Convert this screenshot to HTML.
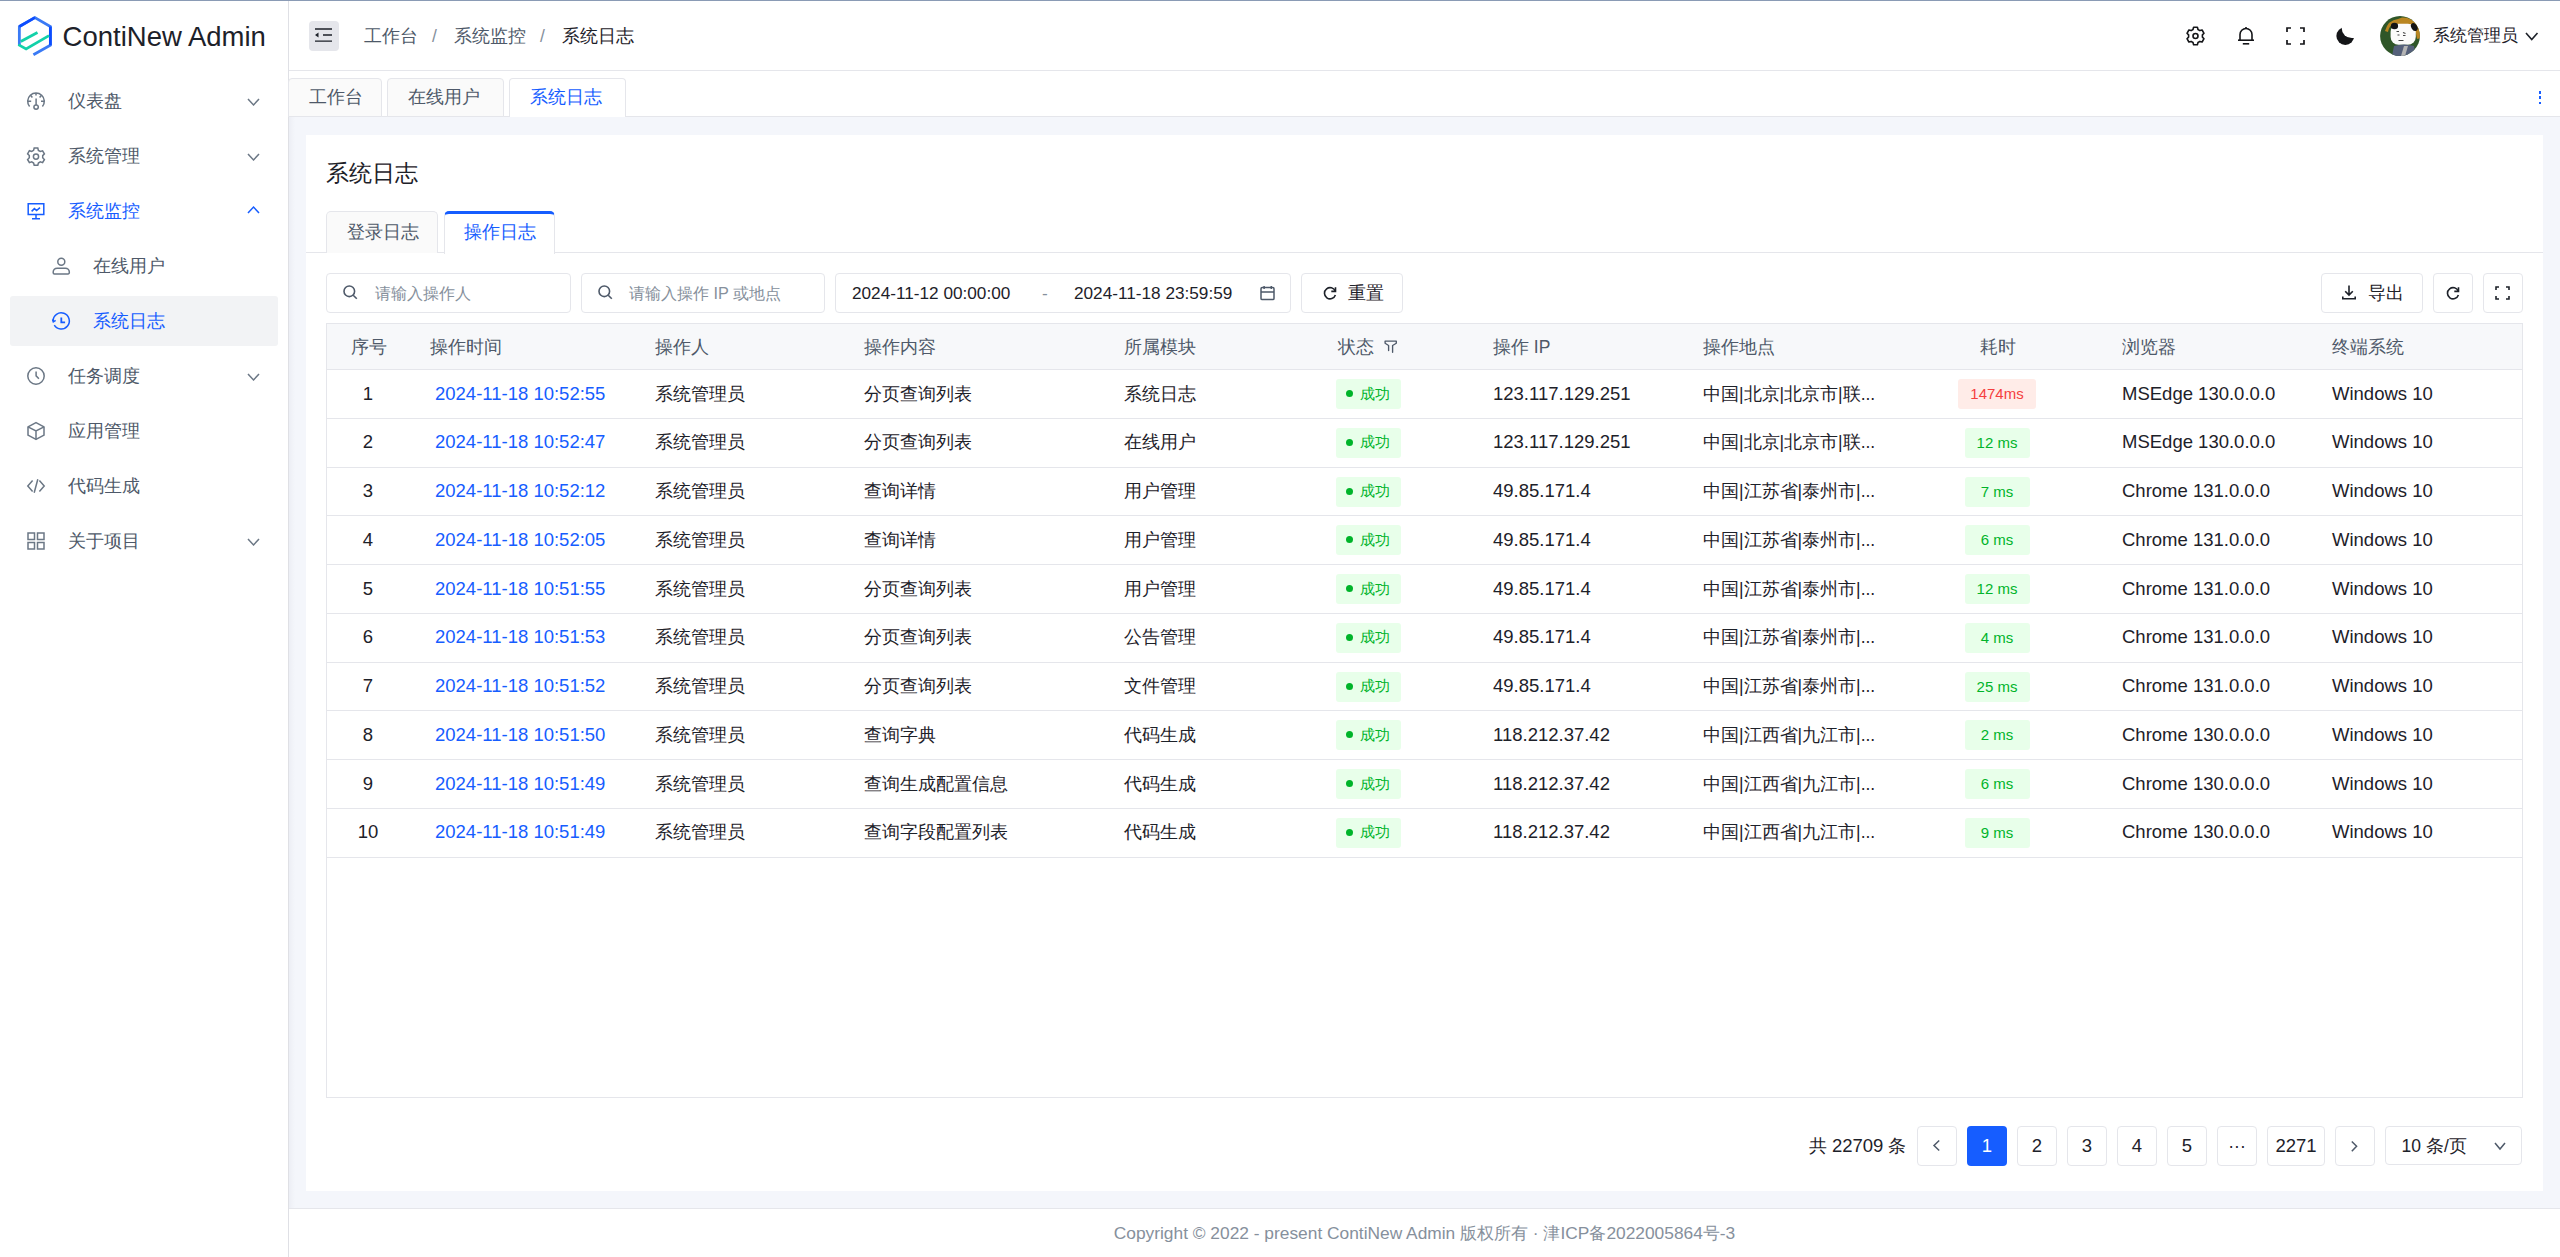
<!DOCTYPE html><html><head><meta charset="utf-8"><style>
*{box-sizing:border-box;margin:0;padding:0}
html,body{width:2560px;height:1257px;overflow:hidden;background:#fff}
body{font-family:"Liberation Sans",sans-serif;font-size:17.5px;color:#1d2129;position:relative}
.ab{position:absolute}
.t{position:absolute;white-space:nowrap;line-height:24px;height:24px}
.bd{border:1px solid #e5e6eb}
svg{position:absolute;overflow:visible}
</style></head><body>

<div class="ab" style="left:0px;top:0px;width:2560px;height:1px;background:#8a9bb5"></div>
<div class="ab" style="left:288px;top:1px;width:1px;height:1256px;background:#dfe0e5"></div>
<svg style="left:10px;top:10px" width="50" height="50" viewBox="0 0 50 50">
<g fill="none" stroke-width="2.8" stroke-linecap="butt" stroke-linejoin="miter" stroke-miterlimit="6">
<path d="M9.36 35.6V16.5L24.86 7.6 40.37 16.6V35.2L23.4 44.8" stroke="#3a7af5"/>
<path d="M9.36 16.5L24.86 7.6" stroke="#0c4cff"/>
<path d="M40.37 16.6V35.2" stroke="#0c4cff"/>
<path d="M8.35 34.6L16.1 38.9 39 25.65" stroke="#12d1a9"/>
<path d="M10.76 31.5L27.5 22.4" stroke="#12d1a9"/>
</g></svg>
<div class="t" style="left:62.6px;top:25px;font-size:27.5px;color:#1d2129;">ContiNew Admin</div>
<div class="ab" style="left:10px;top:296px;width:268px;height:50px;background:#f2f3f5;border-radius:3px"></div>
<svg style="left:27px;top:92px" width="18" height="18" viewBox="0 0 18 18"><g fill="none" stroke="#6b7785" stroke-width="1.5"><path d="M2.6 14.6 A8.3 8.3 0 1 1 15.4 14.6"/><path d="M9 1v2.6M3.5 3.2l1.9 2.3M14.5 3.2l-1.9 2.3M1 9.2h3.2M14 9.2h3.2"/><path d="M9.1 6.6v6.4"/><circle cx="9.1" cy="15.1" r="2.2"/></g></svg>
<div class="t" style="left:68px;top:89px;font-size:17.5px;color:#4e5969;">仪表盘</div>
<svg style="left:248px;top:99px" width="11" height="6" viewBox="0 0 11 6"><path d="M0 0 L5.5 6 L11 0" fill="none" stroke="#6b7785" stroke-width="1.5"/></svg>
<svg style="left:27px;top:147px" width="18" height="18" viewBox="0 0 18 18"><g fill="none" stroke="#6b7785" stroke-width="1.5"><path d="M7.2 1.1h3.6l.6 2.3 1.9 1.1 2.3-.7 1.8 3.1-1.7 1.7v2.2l1.7 1.7-1.8 3.1-2.3-.7-1.9 1.1-.6 2.3H7.2l-.6-2.3-1.9-1.1-2.3.7-1.8-3.1 1.7-1.7V8.5L.6 6.8l1.8-3.1 2.3.7 1.9-1.1z"/><circle cx="9" cy="9.6" r="2.6"/></g></svg>
<div class="t" style="left:68px;top:144px;font-size:17.5px;color:#4e5969;">系统管理</div>
<svg style="left:248px;top:154px" width="11" height="6" viewBox="0 0 11 6"><path d="M0 0 L5.5 6 L11 0" fill="none" stroke="#6b7785" stroke-width="1.5"/></svg>
<svg style="left:27px;top:202px" width="18" height="18" viewBox="0 0 18 18"><g fill="none" stroke="#165dff" stroke-width="1.5"><path d="M1.2 1.8h15.6v10.6H1.2z"/><path d="M9 12.4v4.4M5 16.8h8"/><path d="M4.6 9.4l2.8-2.8 2.2 2 3.4-3"/></g></svg>
<div class="t" style="left:68px;top:199px;font-size:17.5px;color:#165dff;">系统监控</div>
<svg style="left:248px;top:206.8px" width="11" height="6" viewBox="0 0 11 6"><path d="M0 6 L5.5 0 L11 6" fill="none" stroke="#165dff" stroke-width="1.5"/></svg>
<svg style="left:27px;top:367px" width="18" height="18" viewBox="0 0 18 18"><g fill="none" stroke="#6b7785" stroke-width="1.5"><circle cx="9" cy="9" r="8.2"/><path d="M9.1 4.5v4.4l2.8 2.8"/></g></svg>
<div class="t" style="left:68px;top:364px;font-size:17.5px;color:#4e5969;">任务调度</div>
<svg style="left:248px;top:374px" width="11" height="6" viewBox="0 0 11 6"><path d="M0 0 L5.5 6 L11 0" fill="none" stroke="#6b7785" stroke-width="1.5"/></svg>
<svg style="left:27px;top:422px" width="18" height="18" viewBox="0 0 18 18"><g fill="none" stroke="#6b7785" stroke-width="1.5"><path d="M9 .6 17 4.8v8.4L9 17.4 1 13.2V4.8z" stroke-linejoin="round"/><path d="M1 4.8 9 9l8-4.2M9 9v8.4"/></g></svg>
<div class="t" style="left:68px;top:419px;font-size:17.5px;color:#4e5969;">应用管理</div>
<svg style="left:27px;top:477px" width="18" height="18" viewBox="0 0 18 18"><g fill="none" stroke="#6b7785" stroke-width="1.5"><path d="M5.6 3.6 .8 9l4.8 5.4M12.4 3.6 17.2 9l-4.8 5.4M10.8 2.2 7.2 15.8"/></g></svg>
<div class="t" style="left:68px;top:474px;font-size:17.5px;color:#4e5969;">代码生成</div>
<svg style="left:27px;top:532px" width="18" height="18" viewBox="0 0 18 18"><g fill="none" stroke="#6b7785" stroke-width="1.5"><path d="M1 1h6.5v6.5H1zM10.5 1H17v6.5h-6.5zM1 10.5h6.5V17H1zM10.5 10.5H17V17h-6.5z"/></g></svg>
<div class="t" style="left:68px;top:529px;font-size:17.5px;color:#4e5969;">关于项目</div>
<svg style="left:248px;top:539px" width="11" height="6" viewBox="0 0 11 6"><path d="M0 0 L5.5 6 L11 0" fill="none" stroke="#6b7785" stroke-width="1.5"/></svg>
<svg style="left:52px;top:257px" width="18" height="18" viewBox="0 0 18 18"><g fill="none" stroke="#6b7785" stroke-width="1.5"><circle cx="9.3" cy="4.8" r="3.5"/><path d="M5.2 11.2h8.2a3.9 3.9 0 0 1 3.9 3.9v.6a1.2 1.2 0 0 1-1.2 1.2H2.4a1.2 1.2 0 0 1-1.2-1.2v-.6a3.9 3.9 0 0 1 3.9-3.9z"/></g></svg>
<div class="t" style="left:93px;top:254px;font-size:17.5px;color:#4e5969;">在线用户</div>
<svg style="left:52px;top:312px" width="18" height="18" viewBox="0 0 18 18"><g fill="none" stroke="#165dff" stroke-width="1.5"><path d="M2.3 13.2A8.1 8.1 0 1 0 1.1 9"/><path d="M.6 7.4 1.3 10 3.6 8.3" stroke-linejoin="round"/><path d="M9.3 5.6v4.7h3.8" stroke-width="1.8"/></g></svg>
<div class="t" style="left:93px;top:309px;font-size:17.5px;color:#165dff;">系统日志</div>
<div class="ab" style="left:289px;top:70px;width:2271px;height:1px;background:#e5e6eb"></div>
<div class="ab" style="left:309px;top:21px;width:30px;height:30px;background:#e5e6eb;border-radius:4px"></div>
<svg style="left:309px;top:21px" width="30" height="30" viewBox="0 0 30 30"><g stroke="#1d2129" stroke-width="1.3" fill="none">
<path d="M6 8h17M14 14h9M6 20.2h17"/></g><path d="M6 14 9.5 11.5v5z" fill="#1d2129"/></svg>
<div class="t" style="left:364px;top:24px;font-size:17.5px;color:#4e5969;">工作台</div>
<div class="t" style="left:432px;top:24px;font-size:17.5px;color:#86909c;">/</div>
<div class="t" style="left:454px;top:24px;font-size:17.5px;color:#4e5969;">系统监控</div>
<div class="t" style="left:540px;top:24px;font-size:17.5px;color:#86909c;">/</div>
<div class="t" style="left:561.5px;top:24px;font-size:17.5px;color:#1d2129;">系统日志</div>
<svg style="left:2186px;top:26px" width="19" height="19" viewBox="0 0 19 19"><g fill="none" stroke="#141518" stroke-width="1.6">
<path d="M7.6 1.3h3.8l.6 2.2 1.9 1.1 2.2-.6 1.9 3.3-1.6 1.6v2.2l1.6 1.6-1.9 3.3-2.2-.6-1.9 1.1-.6 2.2H7.6L7 16.5l-1.9-1.1-2.2.6L1 12.7l1.6-1.6V8.9L1 7.3 2.9 4l2.2.6L7 3.5z" stroke-linejoin="round"/><circle cx="9.5" cy="10" r="2.5"/></g></svg>
<svg style="left:2237px;top:26px" width="18" height="19" viewBox="0 0 18 19"><g fill="none" stroke="#141518" stroke-width="1.6">
<path d="M3 14.2V8.5a6 6 0 0 1 12 0v5.7"/><path d="M1 14.2h16"/><path d="M5.8 17.8h6.4"/><path d="M9 1v1.5"/></g></svg>
<svg style="left:2285.5px;top:26.5px" width="19" height="18" viewBox="0 0 19 18"><g fill="none" stroke="#141518" stroke-width="1.7">
<path d="M5 1H1v4M14 1h4v4M1 13v4h4M18 13v4h-4"/></g></svg>
<svg style="left:2336px;top:26.5px" width="18" height="18" viewBox="0 0 18 18"><defs><mask id="mm"><rect x="-2" y="-2" width="24" height="24" fill="#fff"/><circle cx="15.8" cy="1.0" r="10.1" fill="#000"/></mask></defs><circle cx="9.3" cy="9.0" r="8.9" fill="#141518" mask="url(#mm)"/></svg>
<svg style="left:2380px;top:16px" width="40" height="40" viewBox="0 0 40 40"><defs><clipPath id="cp"><circle cx="20" cy="20" r="19.9"/></clipPath></defs>
<g clip-path="url(#cp)"><rect width="40" height="40" fill="#2f5628"/>
<path d="M5 15 Q8 4 18 3 L22 1.5 Q30 1 36 7 Q40 12 41 22 L37 23 Q36 12 28 8.5 L14 8 Q9 9.5 8 16z" fill="#b98520"/>
<rect x="10.6" y="7.8" width="25.2" height="21" rx="8" fill="#fbfbfa"/>
<ellipse cx="14.5" cy="10" rx="3.6" ry="3.2" fill="#141414"/><ellipse cx="34.3" cy="11" rx="3" ry="4.2" transform="rotate(-30 34.3 11)" fill="#141414"/>
<path d="M12 40 L14 30 Q24 27 34 30 L36 40z" fill="#55607a"/><path d="M21 40 L24 30 L28 30 L25 40z" fill="#b4b4b4"/>
<path d="M16.5 15.5h2.5M23 16.5l2.5 1M17.5 19h2M23 19.5h2.5M18.5 24.5h5" stroke="#444" stroke-width="1.1"/></g></svg>
<div class="t" style="left:2433px;top:24px;font-size:17.1px;color:#1d2129;">系统管理员</div>
<svg style="left:2526px;top:33px" width="11.5" height="6.5" viewBox="0 0 11.5 6.5"><path d="M0 0 L5.75 6.5 L11.5 0" fill="none" stroke="#1d2129" stroke-width="1.6"/></svg>
<div class="ab" style="left:289px;top:116px;width:2271px;height:1px;background:#e5e6eb"></div>
<div class="ab" style="left:288px;top:78px;width:94px;height:39px;background:#fafafa;border:1px solid #e5e6eb;border-radius:4px 4px 0 0"></div>
<div class="ab" style="left:387px;top:78px;width:117px;height:39px;background:#fafafa;border:1px solid #e5e6eb;border-radius:4px 4px 0 0"></div>
<div class="ab" style="left:509px;top:78px;width:117px;height:39px;background:#fff;border:1px solid #e5e6eb;border-bottom:none;border-radius:4px 4px 0 0"></div>
<div class="t" style="left:309px;top:85px;font-size:17.5px;color:#4e5969;">工作台</div>
<div class="t" style="left:408px;top:85px;font-size:17.5px;color:#4e5969;">在线用户</div>
<div class="t" style="left:530px;top:85px;font-size:17.5px;color:#165dff;">系统日志</div>
<div class="ab" style="left:2538.6px;top:91.0px;width:2.599999999999909px;height:2.5999999999999943px;background:#165dff"></div>
<div class="ab" style="left:2538.6px;top:96.4px;width:2.599999999999909px;height:2.5999999999999943px;background:#165dff"></div>
<div class="ab" style="left:2538.6px;top:101.8px;width:2.599999999999909px;height:2.5999999999999943px;background:#165dff"></div>
<div class="ab" style="left:289px;top:117px;width:2271px;height:1091px;background:#f4f6fb"></div>
<div class="ab" style="left:289px;top:117px;width:6px;height:1091px;background:linear-gradient(to right,rgba(0,0,40,0.03),rgba(0,0,40,0))"></div>
<div class="ab" style="left:306px;top:135px;width:2237px;height:1056px;background:#fff"></div>
<div class="t" style="left:326px;top:161.5px;font-size:22.5px;color:#1d2129;">系统日志</div>
<div class="ab" style="left:306px;top:252px;width:2237px;height:1px;background:#e5e6eb"></div>
<div class="ab" style="left:326px;top:211px;width:112px;height:42px;background:#fafafa;border:1px solid #e5e6eb;border-bottom:none;border-radius:5px 5px 0 0"></div>
<div class="ab" style="left:444px;top:211px;width:111px;height:43px;background:#fff;border:1px solid #e5e6eb;border-top:3px solid #165dff;border-bottom:none;border-radius:5px 5px 0 0"></div>
<div class="t" style="left:347px;top:220px;font-size:17.5px;color:#4e5969;">登录日志</div>
<div class="t" style="left:464px;top:220px;font-size:17.5px;color:#165dff;">操作日志</div>
<div class="ab" style="left:326px;top:273px;width:245px;height:40px;border:1px solid #e5e6eb;border-radius:4px;background:#fff"></div>
<svg style="left:343px;top:285px" width="15" height="15" viewBox="0 0 15 15"><g fill="none" stroke="#4e5969" stroke-width="1.6"><circle cx="6.3" cy="6.3" r="5.3"/><path d="M10.2 10.2 13.8 13.8"/></g></svg>
<div class="t" style="left:375px;top:281px;font-size:16.25px;color:#86909c;">请输入操作人</div>
<div class="ab" style="left:581px;top:273px;width:244px;height:40px;border:1px solid #e5e6eb;border-radius:4px;background:#fff"></div>
<svg style="left:598px;top:285px" width="15" height="15" viewBox="0 0 15 15"><g fill="none" stroke="#4e5969" stroke-width="1.6"><circle cx="6.3" cy="6.3" r="5.3"/><path d="M10.2 10.2 13.8 13.8"/></g></svg>
<div class="t" style="left:629px;top:281px;font-size:16.25px;color:#86909c;">请输入操作 IP 或地点</div>
<div class="ab" style="left:835px;top:273px;width:456px;height:40px;border:1px solid #e5e6eb;border-radius:4px;background:#fff"></div>
<div class="t" style="left:852px;top:281px;font-size:17.2px;color:#1d2129;">2024-11-12 00:00:00</div>
<div class="t" style="left:1042px;top:281px;font-size:17.2px;color:#86909c;">-</div>
<div class="t" style="left:1074px;top:281px;font-size:17.2px;color:#1d2129;">2024-11-18 23:59:59</div>
<svg style="left:1260px;top:286px" width="15" height="14" viewBox="0 0 15 14"><g fill="none" stroke="#4e5969" stroke-width="1.5"><rect x="1" y="1.6" width="13" height="12" rx="1.2"/><path d="M1 6h13M4.1 0v3M11.3 0v3"/></g></svg>
<div class="ab" style="left:1301px;top:273px;width:102px;height:40px;border:1px solid #e5e6eb;border-radius:4px;background:#fff"></div>
<svg style="left:1323px;top:286px" width="14" height="14" viewBox="0 0 14 14"><g fill="none" stroke="#1d2129" stroke-width="1.6"><path d="M12.3 5.2A5.6 5.6 0 1 0 12.4 9"/><path d="M12.5 1.2v4.2H8.3"/></g></svg>
<div class="t" style="left:1348px;top:281px;font-size:17.5px;color:#1d2129;">重置</div>
<div class="ab" style="left:2321px;top:273px;width:102px;height:40px;border:1px solid #e5e6eb;border-radius:4px;background:#fff"></div>
<svg style="left:2342px;top:285px" width="14" height="15" viewBox="0 0 14 15"><g fill="none" stroke="#1d2129" stroke-width="1.6"><path d="M7 0.6v9.6M3.2 6.2 7 10l3.8-3.8"/><path d="M.8 11.5v2.3h12.4v-2.3"/></g></svg>
<div class="t" style="left:2368px;top:281px;font-size:17.5px;color:#1d2129;">导出</div>
<div class="ab" style="left:2433px;top:273px;width:40px;height:40px;border:1px solid #e5e6eb;border-radius:4px;background:#fff"></div>
<svg style="left:2446px;top:286px" width="14" height="14" viewBox="0 0 14 14"><g fill="none" stroke="#1d2129" stroke-width="1.6"><path d="M12.3 5.2A5.6 5.6 0 1 0 12.4 9"/><path d="M12.5 1.2v4.2H8.3"/></g></svg>
<div class="ab" style="left:2483px;top:273px;width:40px;height:40px;border:1px solid #e5e6eb;border-radius:4px;background:#fff"></div>
<svg style="left:2495px;top:285.5px" width="15" height="14" viewBox="0 0 15 14"><g fill="none" stroke="#1d2129" stroke-width="1.6"><path d="M4 1H1v3M11 1h3v3M1 10v3h3M14 10v3h-3"/></g></svg>
<div class="ab" style="left:326px;top:323px;width:2197px;height:775px;border:1px solid #e5e6eb;background:#fff"></div>
<div class="ab" style="left:327px;top:324px;width:2195px;height:45px;background:#f7f8fa"></div>
<div class="ab" style="left:327px;top:369px;width:2195px;height:1px;background:#e5e6eb"></div>
<div class="t" style="left:351px;top:334.5px;font-size:17.5px;color:#4e5969;">序号</div>
<div class="t" style="left:430px;top:334.5px;font-size:17.5px;color:#4e5969;">操作时间</div>
<div class="t" style="left:655px;top:334.5px;font-size:17.5px;color:#4e5969;">操作人</div>
<div class="t" style="left:864px;top:334.5px;font-size:17.5px;color:#4e5969;">操作内容</div>
<div class="t" style="left:1124px;top:334.5px;font-size:17.5px;color:#4e5969;">所属模块</div>
<div class="t" style="left:1338px;top:334.5px;font-size:17.5px;color:#4e5969;">状态</div>
<div class="t" style="left:1493px;top:334.5px;font-size:17.5px;color:#4e5969;">操作 IP</div>
<div class="t" style="left:1703px;top:334.5px;font-size:17.5px;color:#4e5969;">操作地点</div>
<div class="t" style="left:1980px;top:334.5px;font-size:17.5px;color:#4e5969;">耗时</div>
<div class="t" style="left:2122px;top:334.5px;font-size:17.5px;color:#4e5969;">浏览器</div>
<div class="t" style="left:2332px;top:334.5px;font-size:17.5px;color:#4e5969;">终端系统</div>
<svg style="left:1384px;top:340px" width="14" height="14" viewBox="0 0 14 14"><path d="M1.1 1.1H12.3V3.2L8.6 5.5V12.2M1.1 1.1V3.2L4.6 5.5V10.5" fill="none" stroke="#4e5969" stroke-width="1.35" stroke-linejoin="round" stroke-linecap="round"/></svg>
<div class="ab" style="left:327px;top:418px;width:2195px;height:1px;background:#e5e6eb"></div>
<div class="t" style="left:326px;width:84px;text-align:center;top:381.5px;font-size:18.5px">1</div>
<div class="t" style="left:435px;top:381.5px;font-size:18.5px;color:#165dff;">2024-11-18 10:52:55</div>
<div class="t" style="left:655px;top:381.5px;font-size:17.5px;color:#1d2129;">系统管理员</div>
<div class="t" style="left:864px;top:381.5px;font-size:17.5px;color:#1d2129;">分页查询列表</div>
<div class="t" style="left:1124px;top:381.5px;font-size:17.5px;color:#1d2129;">系统日志</div>
<div class="ab" style="left:1336px;top:379.0px;width:65px;height:30px;background:#e8ffea;border-radius:3px"></div>
<div class="ab" style="left:1346.4px;top:390.0px;width:7px;height:7px;border-radius:50%;background:#00b42a"></div>
<div class="t" style="left:1359.5px;top:381.5px;font-size:15px;color:#00b42a;">成功</div>
<div class="t" style="left:1493px;top:381.5px;font-size:18.5px;color:#1d2129;">123.117.129.251</div>
<div class="t" style="left:1703px;top:381.5px;font-size:17.5px;color:#1d2129;">中国|北京|北京市|联...</div>
<div class="ab" style="left:1958.0px;top:379.0px;width:78px;height:30px;background:#ffece8;border-radius:3px;color:#f53f3f;font-size:15px;line-height:30px;text-align:center;white-space:nowrap">1474ms</div>
<div class="t" style="left:2122px;top:381.5px;font-size:18.5px;color:#1d2129;">MSEdge 130.0.0.0</div>
<div class="t" style="left:2332px;top:381.5px;font-size:18.5px;color:#1d2129;">Windows 10</div>
<div class="ab" style="left:327px;top:467px;width:2195px;height:1px;background:#e5e6eb"></div>
<div class="t" style="left:326px;width:84px;text-align:center;top:430.25px;font-size:18.5px">2</div>
<div class="t" style="left:435px;top:430.25px;font-size:18.5px;color:#165dff;">2024-11-18 10:52:47</div>
<div class="t" style="left:655px;top:430.25px;font-size:17.5px;color:#1d2129;">系统管理员</div>
<div class="t" style="left:864px;top:430.25px;font-size:17.5px;color:#1d2129;">分页查询列表</div>
<div class="t" style="left:1124px;top:430.25px;font-size:17.5px;color:#1d2129;">在线用户</div>
<div class="ab" style="left:1336px;top:427.75px;width:65px;height:30px;background:#e8ffea;border-radius:3px"></div>
<div class="ab" style="left:1346.4px;top:438.75px;width:7px;height:7px;border-radius:50%;background:#00b42a"></div>
<div class="t" style="left:1359.5px;top:430.25px;font-size:15px;color:#00b42a;">成功</div>
<div class="t" style="left:1493px;top:430.25px;font-size:18.5px;color:#1d2129;">123.117.129.251</div>
<div class="t" style="left:1703px;top:430.25px;font-size:17.5px;color:#1d2129;">中国|北京|北京市|联...</div>
<div class="ab" style="left:1964.5px;top:427.75px;width:65px;height:30px;background:#e8ffea;border-radius:3px;color:#00b42a;font-size:15px;line-height:30px;text-align:center;white-space:nowrap">12 ms</div>
<div class="t" style="left:2122px;top:430.25px;font-size:18.5px;color:#1d2129;">MSEdge 130.0.0.0</div>
<div class="t" style="left:2332px;top:430.25px;font-size:18.5px;color:#1d2129;">Windows 10</div>
<div class="ab" style="left:327px;top:515px;width:2195px;height:1px;background:#e5e6eb"></div>
<div class="t" style="left:326px;width:84px;text-align:center;top:479.0px;font-size:18.5px">3</div>
<div class="t" style="left:435px;top:479.0px;font-size:18.5px;color:#165dff;">2024-11-18 10:52:12</div>
<div class="t" style="left:655px;top:479.0px;font-size:17.5px;color:#1d2129;">系统管理员</div>
<div class="t" style="left:864px;top:479.0px;font-size:17.5px;color:#1d2129;">查询详情</div>
<div class="t" style="left:1124px;top:479.0px;font-size:17.5px;color:#1d2129;">用户管理</div>
<div class="ab" style="left:1336px;top:476.5px;width:65px;height:30px;background:#e8ffea;border-radius:3px"></div>
<div class="ab" style="left:1346.4px;top:487.5px;width:7px;height:7px;border-radius:50%;background:#00b42a"></div>
<div class="t" style="left:1359.5px;top:479.0px;font-size:15px;color:#00b42a;">成功</div>
<div class="t" style="left:1493px;top:479.0px;font-size:18.5px;color:#1d2129;">49.85.171.4</div>
<div class="t" style="left:1703px;top:479.0px;font-size:17.5px;color:#1d2129;">中国|江苏省|泰州市|...</div>
<div class="ab" style="left:1964.5px;top:476.5px;width:65px;height:30px;background:#e8ffea;border-radius:3px;color:#00b42a;font-size:15px;line-height:30px;text-align:center;white-space:nowrap">7 ms</div>
<div class="t" style="left:2122px;top:479.0px;font-size:18.5px;color:#1d2129;">Chrome 131.0.0.0</div>
<div class="t" style="left:2332px;top:479.0px;font-size:18.5px;color:#1d2129;">Windows 10</div>
<div class="ab" style="left:327px;top:564px;width:2195px;height:1px;background:#e5e6eb"></div>
<div class="t" style="left:326px;width:84px;text-align:center;top:527.75px;font-size:18.5px">4</div>
<div class="t" style="left:435px;top:527.75px;font-size:18.5px;color:#165dff;">2024-11-18 10:52:05</div>
<div class="t" style="left:655px;top:527.75px;font-size:17.5px;color:#1d2129;">系统管理员</div>
<div class="t" style="left:864px;top:527.75px;font-size:17.5px;color:#1d2129;">查询详情</div>
<div class="t" style="left:1124px;top:527.75px;font-size:17.5px;color:#1d2129;">用户管理</div>
<div class="ab" style="left:1336px;top:525.25px;width:65px;height:30px;background:#e8ffea;border-radius:3px"></div>
<div class="ab" style="left:1346.4px;top:536.25px;width:7px;height:7px;border-radius:50%;background:#00b42a"></div>
<div class="t" style="left:1359.5px;top:527.75px;font-size:15px;color:#00b42a;">成功</div>
<div class="t" style="left:1493px;top:527.75px;font-size:18.5px;color:#1d2129;">49.85.171.4</div>
<div class="t" style="left:1703px;top:527.75px;font-size:17.5px;color:#1d2129;">中国|江苏省|泰州市|...</div>
<div class="ab" style="left:1964.5px;top:525.25px;width:65px;height:30px;background:#e8ffea;border-radius:3px;color:#00b42a;font-size:15px;line-height:30px;text-align:center;white-space:nowrap">6 ms</div>
<div class="t" style="left:2122px;top:527.75px;font-size:18.5px;color:#1d2129;">Chrome 131.0.0.0</div>
<div class="t" style="left:2332px;top:527.75px;font-size:18.5px;color:#1d2129;">Windows 10</div>
<div class="ab" style="left:327px;top:613px;width:2195px;height:1px;background:#e5e6eb"></div>
<div class="t" style="left:326px;width:84px;text-align:center;top:576.5px;font-size:18.5px">5</div>
<div class="t" style="left:435px;top:576.5px;font-size:18.5px;color:#165dff;">2024-11-18 10:51:55</div>
<div class="t" style="left:655px;top:576.5px;font-size:17.5px;color:#1d2129;">系统管理员</div>
<div class="t" style="left:864px;top:576.5px;font-size:17.5px;color:#1d2129;">分页查询列表</div>
<div class="t" style="left:1124px;top:576.5px;font-size:17.5px;color:#1d2129;">用户管理</div>
<div class="ab" style="left:1336px;top:574.0px;width:65px;height:30px;background:#e8ffea;border-radius:3px"></div>
<div class="ab" style="left:1346.4px;top:585.0px;width:7px;height:7px;border-radius:50%;background:#00b42a"></div>
<div class="t" style="left:1359.5px;top:576.5px;font-size:15px;color:#00b42a;">成功</div>
<div class="t" style="left:1493px;top:576.5px;font-size:18.5px;color:#1d2129;">49.85.171.4</div>
<div class="t" style="left:1703px;top:576.5px;font-size:17.5px;color:#1d2129;">中国|江苏省|泰州市|...</div>
<div class="ab" style="left:1964.5px;top:574.0px;width:65px;height:30px;background:#e8ffea;border-radius:3px;color:#00b42a;font-size:15px;line-height:30px;text-align:center;white-space:nowrap">12 ms</div>
<div class="t" style="left:2122px;top:576.5px;font-size:18.5px;color:#1d2129;">Chrome 131.0.0.0</div>
<div class="t" style="left:2332px;top:576.5px;font-size:18.5px;color:#1d2129;">Windows 10</div>
<div class="ab" style="left:327px;top:662px;width:2195px;height:1px;background:#e5e6eb"></div>
<div class="t" style="left:326px;width:84px;text-align:center;top:625.25px;font-size:18.5px">6</div>
<div class="t" style="left:435px;top:625.25px;font-size:18.5px;color:#165dff;">2024-11-18 10:51:53</div>
<div class="t" style="left:655px;top:625.25px;font-size:17.5px;color:#1d2129;">系统管理员</div>
<div class="t" style="left:864px;top:625.25px;font-size:17.5px;color:#1d2129;">分页查询列表</div>
<div class="t" style="left:1124px;top:625.25px;font-size:17.5px;color:#1d2129;">公告管理</div>
<div class="ab" style="left:1336px;top:622.75px;width:65px;height:30px;background:#e8ffea;border-radius:3px"></div>
<div class="ab" style="left:1346.4px;top:633.75px;width:7px;height:7px;border-radius:50%;background:#00b42a"></div>
<div class="t" style="left:1359.5px;top:625.25px;font-size:15px;color:#00b42a;">成功</div>
<div class="t" style="left:1493px;top:625.25px;font-size:18.5px;color:#1d2129;">49.85.171.4</div>
<div class="t" style="left:1703px;top:625.25px;font-size:17.5px;color:#1d2129;">中国|江苏省|泰州市|...</div>
<div class="ab" style="left:1964.5px;top:622.75px;width:65px;height:30px;background:#e8ffea;border-radius:3px;color:#00b42a;font-size:15px;line-height:30px;text-align:center;white-space:nowrap">4 ms</div>
<div class="t" style="left:2122px;top:625.25px;font-size:18.5px;color:#1d2129;">Chrome 131.0.0.0</div>
<div class="t" style="left:2332px;top:625.25px;font-size:18.5px;color:#1d2129;">Windows 10</div>
<div class="ab" style="left:327px;top:710px;width:2195px;height:1px;background:#e5e6eb"></div>
<div class="t" style="left:326px;width:84px;text-align:center;top:674.0px;font-size:18.5px">7</div>
<div class="t" style="left:435px;top:674.0px;font-size:18.5px;color:#165dff;">2024-11-18 10:51:52</div>
<div class="t" style="left:655px;top:674.0px;font-size:17.5px;color:#1d2129;">系统管理员</div>
<div class="t" style="left:864px;top:674.0px;font-size:17.5px;color:#1d2129;">分页查询列表</div>
<div class="t" style="left:1124px;top:674.0px;font-size:17.5px;color:#1d2129;">文件管理</div>
<div class="ab" style="left:1336px;top:671.5px;width:65px;height:30px;background:#e8ffea;border-radius:3px"></div>
<div class="ab" style="left:1346.4px;top:682.5px;width:7px;height:7px;border-radius:50%;background:#00b42a"></div>
<div class="t" style="left:1359.5px;top:674.0px;font-size:15px;color:#00b42a;">成功</div>
<div class="t" style="left:1493px;top:674.0px;font-size:18.5px;color:#1d2129;">49.85.171.4</div>
<div class="t" style="left:1703px;top:674.0px;font-size:17.5px;color:#1d2129;">中国|江苏省|泰州市|...</div>
<div class="ab" style="left:1964.5px;top:671.5px;width:65px;height:30px;background:#e8ffea;border-radius:3px;color:#00b42a;font-size:15px;line-height:30px;text-align:center;white-space:nowrap">25 ms</div>
<div class="t" style="left:2122px;top:674.0px;font-size:18.5px;color:#1d2129;">Chrome 131.0.0.0</div>
<div class="t" style="left:2332px;top:674.0px;font-size:18.5px;color:#1d2129;">Windows 10</div>
<div class="ab" style="left:327px;top:759px;width:2195px;height:1px;background:#e5e6eb"></div>
<div class="t" style="left:326px;width:84px;text-align:center;top:722.75px;font-size:18.5px">8</div>
<div class="t" style="left:435px;top:722.75px;font-size:18.5px;color:#165dff;">2024-11-18 10:51:50</div>
<div class="t" style="left:655px;top:722.75px;font-size:17.5px;color:#1d2129;">系统管理员</div>
<div class="t" style="left:864px;top:722.75px;font-size:17.5px;color:#1d2129;">查询字典</div>
<div class="t" style="left:1124px;top:722.75px;font-size:17.5px;color:#1d2129;">代码生成</div>
<div class="ab" style="left:1336px;top:720.25px;width:65px;height:30px;background:#e8ffea;border-radius:3px"></div>
<div class="ab" style="left:1346.4px;top:731.25px;width:7px;height:7px;border-radius:50%;background:#00b42a"></div>
<div class="t" style="left:1359.5px;top:722.75px;font-size:15px;color:#00b42a;">成功</div>
<div class="t" style="left:1493px;top:722.75px;font-size:18.5px;color:#1d2129;">118.212.37.42</div>
<div class="t" style="left:1703px;top:722.75px;font-size:17.5px;color:#1d2129;">中国|江西省|九江市|...</div>
<div class="ab" style="left:1964.5px;top:720.25px;width:65px;height:30px;background:#e8ffea;border-radius:3px;color:#00b42a;font-size:15px;line-height:30px;text-align:center;white-space:nowrap">2 ms</div>
<div class="t" style="left:2122px;top:722.75px;font-size:18.5px;color:#1d2129;">Chrome 130.0.0.0</div>
<div class="t" style="left:2332px;top:722.75px;font-size:18.5px;color:#1d2129;">Windows 10</div>
<div class="ab" style="left:327px;top:808px;width:2195px;height:1px;background:#e5e6eb"></div>
<div class="t" style="left:326px;width:84px;text-align:center;top:771.5px;font-size:18.5px">9</div>
<div class="t" style="left:435px;top:771.5px;font-size:18.5px;color:#165dff;">2024-11-18 10:51:49</div>
<div class="t" style="left:655px;top:771.5px;font-size:17.5px;color:#1d2129;">系统管理员</div>
<div class="t" style="left:864px;top:771.5px;font-size:17.5px;color:#1d2129;">查询生成配置信息</div>
<div class="t" style="left:1124px;top:771.5px;font-size:17.5px;color:#1d2129;">代码生成</div>
<div class="ab" style="left:1336px;top:769.0px;width:65px;height:30px;background:#e8ffea;border-radius:3px"></div>
<div class="ab" style="left:1346.4px;top:780.0px;width:7px;height:7px;border-radius:50%;background:#00b42a"></div>
<div class="t" style="left:1359.5px;top:771.5px;font-size:15px;color:#00b42a;">成功</div>
<div class="t" style="left:1493px;top:771.5px;font-size:18.5px;color:#1d2129;">118.212.37.42</div>
<div class="t" style="left:1703px;top:771.5px;font-size:17.5px;color:#1d2129;">中国|江西省|九江市|...</div>
<div class="ab" style="left:1964.5px;top:769.0px;width:65px;height:30px;background:#e8ffea;border-radius:3px;color:#00b42a;font-size:15px;line-height:30px;text-align:center;white-space:nowrap">6 ms</div>
<div class="t" style="left:2122px;top:771.5px;font-size:18.5px;color:#1d2129;">Chrome 130.0.0.0</div>
<div class="t" style="left:2332px;top:771.5px;font-size:18.5px;color:#1d2129;">Windows 10</div>
<div class="ab" style="left:327px;top:857px;width:2195px;height:1px;background:#e5e6eb"></div>
<div class="t" style="left:326px;width:84px;text-align:center;top:820.25px;font-size:18.5px">10</div>
<div class="t" style="left:435px;top:820.25px;font-size:18.5px;color:#165dff;">2024-11-18 10:51:49</div>
<div class="t" style="left:655px;top:820.25px;font-size:17.5px;color:#1d2129;">系统管理员</div>
<div class="t" style="left:864px;top:820.25px;font-size:17.5px;color:#1d2129;">查询字段配置列表</div>
<div class="t" style="left:1124px;top:820.25px;font-size:17.5px;color:#1d2129;">代码生成</div>
<div class="ab" style="left:1336px;top:817.75px;width:65px;height:30px;background:#e8ffea;border-radius:3px"></div>
<div class="ab" style="left:1346.4px;top:828.75px;width:7px;height:7px;border-radius:50%;background:#00b42a"></div>
<div class="t" style="left:1359.5px;top:820.25px;font-size:15px;color:#00b42a;">成功</div>
<div class="t" style="left:1493px;top:820.25px;font-size:18.5px;color:#1d2129;">118.212.37.42</div>
<div class="t" style="left:1703px;top:820.25px;font-size:17.5px;color:#1d2129;">中国|江西省|九江市|...</div>
<div class="ab" style="left:1964.5px;top:817.75px;width:65px;height:30px;background:#e8ffea;border-radius:3px;color:#00b42a;font-size:15px;line-height:30px;text-align:center;white-space:nowrap">9 ms</div>
<div class="t" style="left:2122px;top:820.25px;font-size:18.5px;color:#1d2129;">Chrome 130.0.0.0</div>
<div class="t" style="left:2332px;top:820.25px;font-size:18.5px;color:#1d2129;">Windows 10</div>
<div class="t" style="left:1809px;top:1134px;font-size:17.5px;color:#1d2129;">共 <span style="font-size:18.5px">22709</span> 条</div>
<div class="ab" style="left:1917px;top:1126px;width:40px;height:40px;border:1px solid #e5e6eb;border-radius:4px;color:#1d2129;font-size:17.5px;line-height:38px;text-align:center"></div>
<svg style="left:1933px;top:1140.3px" width="7" height="11" viewBox="0 0 7 11"><path d="M6.2 .5 1 5.5l5.2 5" fill="none" stroke="#4e5969" stroke-width="1.5"/></svg>
<div class="ab" style="left:1967px;top:1126px;width:40px;height:40px;background:#165dff;border-radius:4px;color:#fff;font-size:18.5px;line-height:40px;text-align:center">1</div>
<div class="ab" style="left:2017px;top:1126px;width:40px;height:40px;border:1px solid #e5e6eb;border-radius:4px;color:#1d2129;font-size:18.5px;line-height:38px;text-align:center">2</div>
<div class="ab" style="left:2067px;top:1126px;width:40px;height:40px;border:1px solid #e5e6eb;border-radius:4px;color:#1d2129;font-size:18.5px;line-height:38px;text-align:center">3</div>
<div class="ab" style="left:2117px;top:1126px;width:40px;height:40px;border:1px solid #e5e6eb;border-radius:4px;color:#1d2129;font-size:18.5px;line-height:38px;text-align:center">4</div>
<div class="ab" style="left:2167px;top:1126px;width:40px;height:40px;border:1px solid #e5e6eb;border-radius:4px;color:#1d2129;font-size:18.5px;line-height:38px;text-align:center">5</div>
<div class="ab" style="left:2217px;top:1126px;width:40px;height:40px;border:1px solid #e5e6eb;border-radius:4px;color:#1d2129;font-size:17.5px;line-height:38px;text-align:center">···</div>
<div class="ab" style="left:2267px;top:1126px;width:58px;height:40px;border:1px solid #e5e6eb;border-radius:4px;color:#1d2129;font-size:18.5px;line-height:38px;text-align:center">2271</div>
<div class="ab" style="left:2335px;top:1126px;width:40px;height:40px;border:1px solid #e5e6eb;border-radius:4px;color:#1d2129;font-size:17.5px;line-height:38px;text-align:center"></div>
<svg style="left:2351.2px;top:1140.5px" width="7" height="11" viewBox="0 0 7 11"><path d="M.8 .5 5.6 5.3l-4.8 5" fill="none" stroke="#4e5969" stroke-width="1.5"/></svg>
<div class="ab" style="left:2385px;top:1126px;width:137px;height:39px;border:1px solid #e5e6eb;border-radius:4px"></div>
<div class="t" style="left:2401.6px;top:1134px;font-size:17.5px;color:#1d2129;">10 条/页</div>
<svg style="left:2494.5px;top:1143px" width="10" height="6" viewBox="0 0 10 6"><path d="M0 0 L5.0 6 L10 0" fill="none" stroke="#4e5969" stroke-width="1.5"/></svg>
<div class="ab" style="left:289px;top:1208px;width:2271px;height:1px;background:#e5e6eb"></div>
<div class="t" style="left:289px;width:2271px;text-align:center;top:1221px;color:#86909c;font-size:17.35px">Copyright © 2022 - present ContiNew Admin 版权所有 · 津ICP备2022005864号-3</div>
</body></html>
